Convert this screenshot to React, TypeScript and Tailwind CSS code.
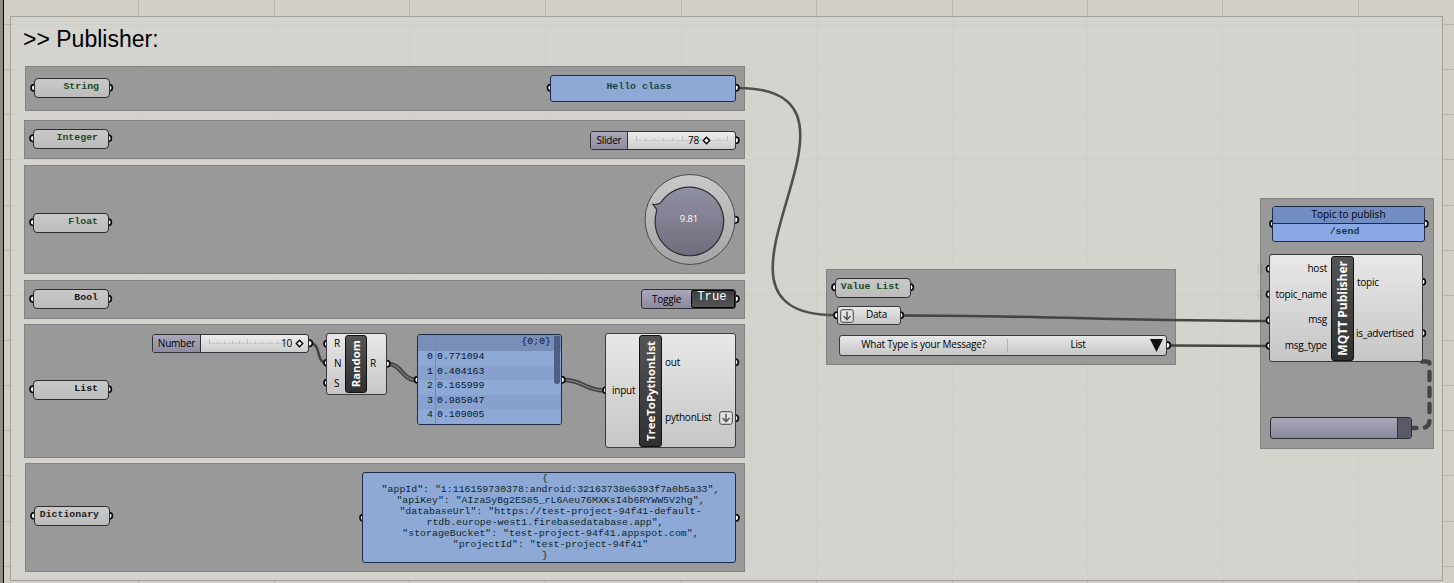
import React from "react";

const UI = "font-['Open_Sans','Noto_Sans',sans-serif] text-[10px] leading-none tracking-[-0.24px] text-black whitespace-nowrap";
const MONO = "font-['Liberation_Mono',monospace] text-[9.88px] leading-none whitespace-nowrap";

const verticals = [138, 274, 409, 545, 681, 816, 952, 1087, 1222, 1358];
const horizontals = [24, 69, 114, 159, 205, 250, 295, 340, 385, 430, 475, 521, 566];

const grips: [number, number][] = [
  [34, 88], [109, 88], [33, 138.5], [108, 138.5], [33, 222.5], [108, 222.5],
  [33, 299], [108, 299], [33, 389.5], [108, 389.5], [34, 516], [109, 516],
  [550.5, 88], [735.5, 88], [735.5, 140.5], [735, 220], [735.5, 299],
  [309, 343.5], [327, 344], [327, 363], [327, 383], [386.5, 364],
  [417.5, 380], [561.5, 380], [606, 390.5], [735, 362.5], [735, 418.5],
  [363, 518], [735.5, 518],
  [835, 287.5], [910, 287.5], [837, 315.5], [900, 315.5], [1167, 345.5],
  [1273, 224], [1424.5, 224],
  [1269.5, 269], [1269.5, 294.5], [1269.5, 320.5], [1269.5, 346],
  [1422, 282], [1422, 333.5],
];

function Backdrop() {
  return (
    <svg className="absolute inset-0" width="1454" height="583" shapeRendering="crispEdges">
      <g stroke="#bab5ae" strokeWidth="1">
        {verticals.map((x) => <line key={x} x1={x + 0.5} x2={x + 0.5} y1="0" y2="583" />)}
        {horizontals.map((y) => <line key={y} x1="0" x2="1454" y1={y + 0.5} y2={y + 0.5} />)}
      </g>
    </svg>
  );
}

function Wires() {
  return (
    <svg className="absolute inset-0" width="1454" height="583" fill="none">
      <g stroke="#50504d" strokeWidth="2.6">
        <path d="M738 88C902 88 671 315 835 315" />
        <path d="M903 315.5C1030 315.5 1140 321 1268 321" stroke="#444442" />
        <path d="M1170 345.5L1268 346" stroke="#444442" />
        <path d="M311 343.5C321 343.5 316 363 326 363" stroke="#444" />
      </g>
      {["M388 364C402 364 402 380 416 380", "M563 380C584 380 584 390.5 605 390.5"].map((d) => (
        <g key={d}>
          <path d={d} stroke="#454545" strokeWidth="4.6" />
          <path d={d} stroke="#858585" strokeWidth="1.1" />
        </g>
      ))}
      <g stroke="#454545" strokeWidth="4.4" strokeLinecap="round">
        <path d="M1422 361.5H1426Q1429.5 361.5 1429.5 363.5" />
        <path d="M1429.5 372V380M1429.5 388V396M1429.5 404V412" />
        <path d="M1429.5 421Q1429 426 1425 427.5" />
        <path d="M1413 428H1416.5" />
      </g>
      <g stroke="#858582" strokeWidth="1">
        <path d="M1263 263Q1259.500 269 1263 275M1263 288.500Q1259.500 294.500 1263 300.500" />
        <path d="M1259 264Q1256.500 269 1259 274M1259 289.500Q1256.500 294.500 1259 299.500" stroke="#b9b9b5" />
      </g>
      {grips.map(([x, y]) => (
        <circle key={`${x}-${y}`} cx={x + 0.2} cy={y - 0.2} r="3.200" fill="#fff" stroke="#0a0a0a" strokeWidth="1.700" />
      ))}
    </svg>
  );
}

const Group = ({ at }: { at: string }) => (
  <div className={`absolute border border-[#838383] bg-[#999999] ${at}`} />
);

function Label({ at, children, tone = "text-[#1d4a1f]" }: { at: string; children: string; tone?: string }) {
  return (
    <div className={`absolute flex h-5 w-[76px] items-center justify-end rounded-[4px] border border-[#2d2d2d] bg-linear-to-b from-[#c9c9c9] to-[#bcbcbc] pr-[10px] pb-[3px] font-bold ${MONO} ${tone} ${at}`}>
      {children}
    </div>
  );
}

function SliderNode({ at, name, nameBox, value, ticks, tail }: { at: string; name: string; nameBox: string; value: string; ticks: number; tail: string }) {
  return (
    <div className={`absolute flex h-[19px] overflow-hidden rounded-[3px] border border-[#303036] bg-linear-to-b from-[#eeeeee] to-[#cccccc] ${at}`}>
      <div className={`flex items-center justify-center border-r border-[#303036] bg-linear-to-b from-[#aaa8bb] to-[#8f8ca2] pb-[2px] ${UI} ${nameBox}`}>{name}</div>
      <div className="relative flex-1">
        <svg className="absolute inset-0" width="108" height="17" fill="none" stroke="#bdbdbd" shapeRendering="crispEdges">
          <path d={`M8 8.500H${ticks}`} stroke="#cacaca" />
          {Array.from({ length: 11 }, (_, i) => {
            const x = Math.round(8 + (i * (ticks - 8)) / 10) + 0.5;
            return <path key={i} d={`M${x} ${i % 5 ? 6 : 4}V9`} />;
          })}
        </svg>
        <div className={`absolute top-0 flex h-4 items-center gap-[3px] ${UI} ${tail}`}>
          <span className="pb-px">{value}</span>
          <svg width="9" height="9" viewBox="0 0 9 9"><path d="M4.500 1.300L7.700 4.500L4.500 7.700L1.300 4.500Z" fill="#fff" stroke="#000" strokeWidth="1.400" /></svg>
        </div>
      </div>
    </div>
  );
}

const PlateName = ({ at, children }: { at: string; children: string }) => (
  <div className={`absolute flex items-center justify-center rounded-[3px] border border-[#111] bg-linear-to-b from-[#555] to-[#303030] ${at}`}>
    <span className="rotate-180 font-['Open_Sans','Noto_Sans',sans-serif] leading-none font-bold whitespace-nowrap text-white [writing-mode:vertical-rl]">{children}</span>
  </div>
);

const ArrowBox = () => (
  <svg className="shrink-0" width="14" height="14" viewBox="0 0 14 14" fill="none" stroke="#444">
    <rect x="0.700" y="0.700" width="12.600" height="12.600" rx="2" fill="#e2e2e2" />
    <path d="M7 2.800V10.500M3.500 7L7 10.700L10.500 7" stroke="#555" strokeWidth="1.500" />
  </svg>
);

const plate = "absolute rounded-[3px] border border-[#3a3a3a] bg-linear-to-b from-[#e8e8e8] to-[#c6c6c6]";

function Knob() {
  return (
    <div className="absolute top-[174px] left-[644px] flex h-[92px] w-[92px] items-center justify-center">
      <svg className="absolute inset-0" width="92" height="92">
        <defs>
          <linearGradient id="ring" x1="0" x2="0" y1="0" y2="1"><stop stopColor="#c9c9c9" /><stop offset="1" stopColor="#a4a4a4" /></linearGradient>
          <linearGradient id="dial" x1="0" x2="0" y1="0" y2="1"><stop stopColor="#918fa2" /><stop offset="1" stopColor="#6f6d7d" /></linearGradient>
        </defs>
        <circle cx="46" cy="45.500" r="45" fill="url(#ring)" stroke="#4a4a4a" />
        <path d="M16.500 29A34.300 34.300 0 1 1 12.300 38.500L12.600 35.500L9 30.300Q12.500 31 16.500 29Z" fill="url(#dial)" stroke="#2c2c33" strokeWidth="1.200" />
      </svg>
      <span className="relative pr-[2px] pb-[3px] font-['Open_Sans','Noto_Sans',sans-serif] text-[9.5px] leading-none tracking-[-0.1px] text-white">9.81</span>
    </div>
  );
}

const numbers = ["0.771094", "0.404163", "0.165999", "0.985047", "0.109005"];

function NumberPanel() {
  return (
    <div className={`absolute top-[334px] left-[417px] flex h-[91px] w-[145px] flex-col overflow-hidden rounded-[3px] border border-[#1f2c49] bg-[#8fa9d7] text-[#0d1626] ${MONO}`}>
      <div className="flex h-[16px] shrink-0 items-center justify-end bg-[#7a8fb8] pr-[10px] pb-[2px]">{"{0;0}"}</div>
      {numbers.map((n, i) => (
        <div key={n} className={`flex h-[14.500px] shrink-0 items-center pb-[2px] ${i % 2 ? "bg-[#87a0ce]" : "bg-[#8fa9d7]"}`}>
          <span className="w-[15px] text-right">{i}</span>
          <span className="pl-[4px]">{n}</span>
        </div>
      ))}
      <div className="absolute top-0 left-[17px] h-full w-px bg-[#7489b3]" />
      <div className="absolute top-px right-px h-12 w-[6px] rounded-b-[3px] bg-[#4d5f85]" />
    </div>
  );
}

const json = [
  { text: "{", inset: "pl-0" },
  { text: '"appId": "1:116159730378:android:32163738e6393f7a0b5a33",', inset: "pl-[11px]" },
  { text: '"apiKey": "AIzaSyBg2ES85_rL6Aeu76MXKsI4b6RYWW5V2hg",', inset: "pl-[11px]" },
  { text: '"databaseUrl": "https://test-project-94f41-default-', inset: "pl-[11px]" },
  { text: 'rtdb.europe-west1.firebasedatabase.app",', inset: "pl-0" },
  { text: '"storageBucket": "test-project-94f41.appspot.com",', inset: "pl-[11px]" },
  { text: '"projectId": "test-project-94f41"', inset: "pl-[11px]" },
  { text: "}", inset: "pl-0" },
];

export default function App() {
  return (
    <div className="relative h-[583px] w-[1454px] overflow-hidden bg-[#d4cec8]">
      <Backdrop />
      <div className="absolute inset-y-0 left-0 w-[4px] border-r border-black bg-[#8f8d88]" />
      <div className="absolute top-[16px] left-[10px] h-[565px] w-[1433px] border border-[#a3a19c] bg-[#d5d5cf]/80" />
      <h1 className="absolute top-[26px] left-[23px] font-['Liberation_Sans',sans-serif] text-[23px] leading-[26px] whitespace-nowrap text-black">&gt;&gt; Publisher:</h1>

      <Group at="left-[25px] top-[66px] w-[720px] h-[45px]" />
      <Group at="left-[24px] top-[120px] w-[721px] h-[39px]" />
      <Group at="left-[24px] top-[165px] w-[721px] h-[109px]" />
      <Group at="left-[24px] top-[280px] w-[721px] h-[39px]" />
      <Group at="left-[24px] top-[324px] w-[721px] h-[134px]" />
      <Group at="left-[25px] top-[463px] w-[720px] h-[109px]" />
      <Group at="left-[826px] top-[269px] w-[350px] h-[96px]" />
      <Group at="left-[1260px] top-[198px] w-[174px] h-[251px]" />
      <Wires />

      <Label at="left-[34px] top-[78px]">String</Label>
      <Label at="left-[33px] top-[129px]">Integer</Label>
      <Label at="left-[33px] top-[213px]">Float</Label>
      <Label at="left-[33px] top-[289px]" tone="text-[#1a1a1a]">Bool</Label>
      <Label at="left-[33px] top-[380px]" tone="text-[#111]">List</Label>
      <Label at="left-[34px] top-[506px]" tone="text-[#222]">Dictionary</Label>
      <Label at="left-[835px] top-[278px]">Value List</Label>

      <div className={`absolute top-[75px] left-[550px] flex h-[27px] w-[186px] items-center justify-center rounded-[3px] border border-[#1f2c49] bg-[#8fa9d7] pr-[8px] pb-[4px] font-bold text-[#1b4647] ${MONO}`}>Hello class</div>
      <SliderNode at="left-[590px] top-[131px] w-[146px]" name="Slider" nameBox="w-[37px]" value="78" ticks={99} tail="right-[24px]" />
      <Knob />

      <div className="absolute top-[289px] left-[641px] flex h-5 w-[95px] items-center rounded-[3px] border border-[#303036] bg-linear-to-b from-[#a9a7ba] to-[#8d8a9f]">
        <div className={`flex-1 pb-px text-center ${UI}`}>Toggle</div>
        <div className="flex h-[18px] w-[44px] items-center justify-center rounded-[2px] border border-black bg-linear-to-b from-[#3e3e3e] to-[#555] pr-[2px] pb-[3px] font-['Liberation_Mono',monospace] text-[12.3px] leading-none text-white">True</div>
      </div>

      <SliderNode at="left-[152px] top-[334px] w-[157px]" name="Number" nameBox="w-[48px]" value="10" ticks={84} tail="right-[4px]" />
      <div className={`left-[326px] top-[333px] h-[62px] w-[61px] ${plate}`}>
        <div className={`absolute top-[4px] left-[7px] flex h-[50px] flex-col justify-between ${UI}`}><span>R</span><span>N</span><span>S</span></div>
        <PlateName at="left-[18px] top-px w-[22px] h-[58px] text-[11.4px]">Random</PlateName>
        <span className={`absolute top-[24px] left-[43px] ${UI}`}>R</span>
      </div>
      <NumberPanel />

      <div className={`left-[605px] top-[333px] h-[115px] w-[131px] ${plate}`}>
        <span className={`absolute top-[51px] left-[6px] ${UI}`}>input</span>
        <PlateName at="left-[33px] top-px w-[23px] h-[112px] text-[11.4px]">TreeToPythonList</PlateName>
        <div className={`absolute top-[23px] left-[59px] ${UI}`}>out</div>
        <div className={`absolute top-[77px] right-[2px] left-[59px] flex items-center justify-between ${UI}`}><span className="pb-[2px]">pythonList</span><ArrowBox /></div>
      </div>

      <div className={`absolute top-[472px] left-[362px] flex h-[91px] w-[374px] flex-col items-center rounded-[3px] border border-[#1f2c49] bg-[#8fa9d7] pt-px pr-[8px] text-[#0b2a2c] ${MONO}`}>
        {json.map(({ text, inset }) => <div key={text} className={`h-[10.960px] shrink-0 leading-[10.96px] ${inset}`}>{text}</div>)}
      </div>

      <div className={`left-[837px] top-[306px] flex h-[19px] w-[64px] items-center pl-[2px] ${plate} ${UI}`}>
        <ArrowBox />
        <span className="flex-1 pb-[3px] pr-px text-center">Data</span>
      </div>
      <div className={`left-[839px] top-[335px] flex h-[21px] w-[328px] items-center ${plate} ${UI}`}>
        <span className="w-[167px] pb-[3px] text-center">What Type is your Message?</span>
        <span className="h-[14px] w-px bg-[#b3b3b3]" />
        <span className="flex-1 pr-[2px] pb-[3px] text-center">List</span>
        <svg className="mr-[3px]" width="13" height="13"><path d="M0 0H13L6.500 13Z" fill="#111" /></svg>
      </div>

      <div className="absolute top-[206px] left-[1272px] flex h-[36px] w-[153px] flex-col rounded-[3px] border border-[#1f2c49] bg-[#8aa9e4]">
        <div className={`flex h-[17px] shrink-0 items-center justify-center border-b border-[#1f2c49] bg-[#718dc2] pb-[2px] tracking-normal ${UI}`}>Topic to publish</div>
        <div className={`flex flex-1 items-center justify-center pr-[8px] pb-px font-bold text-[#0d3a45] ${MONO}`}>/send</div>
      </div>

      <div className={`left-[1269px] top-[254px] h-[108px] w-[154px] ${plate}`}>
        <div className={`absolute top-0 left-0 flex w-[57px] flex-col items-end ${UI}`}>
          {["host", "topic_name", "msg", "msg_type"].map((t) => <span key={t} className="flex h-[25.700px] items-center">{t}</span>)}
        </div>
        <PlateName at="left-[61px] top-px w-[23px] h-[105px] text-[12px]">MQTT Publisher</PlateName>
        <span className={`absolute top-[22px] left-[87px] ${UI}`}>topic</span>
        <span className={`absolute top-[73px] left-[86px] ${UI}`}>is_advertised</span>
      </div>

      <div className="absolute top-[417px] left-[1270px] flex h-[22px] w-[142px] justify-end overflow-hidden rounded-[3px] border border-[#2b2b30] bg-linear-to-b from-[#aaa8b8] to-[#8a889c]">
        <div className="w-[14px] border-l border-[#333] bg-[#5a5966]" />
      </div>
    </div>
  );
}
